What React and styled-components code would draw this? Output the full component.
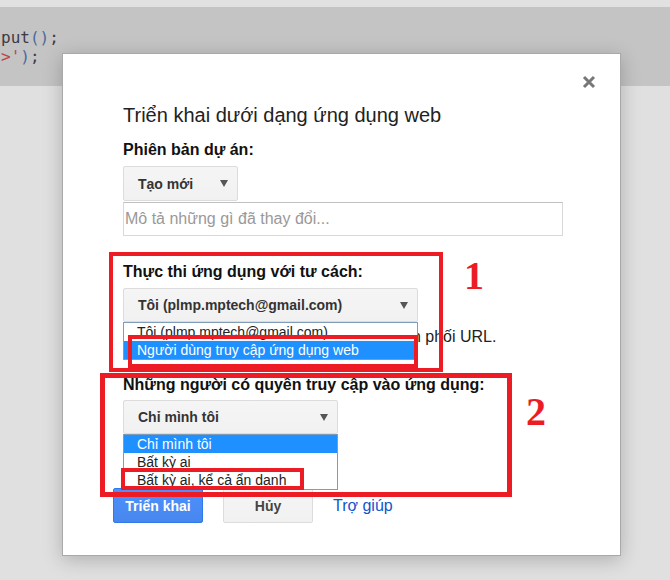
import React from "react";
import styled, { createGlobalStyle } from "styled-components";

const GlobalStyle = createGlobalStyle`
  html, body {
    margin: 0;
    padding: 0;
    background: #e0e0e0;
  }
  body {
    font-family: "Liberation Sans", Arial, sans-serif;
  }
`;

const Page = styled.div`
  position: relative;
  width: 670px;
  height: 580px;
  overflow: hidden;
  display: flex;
  flex-direction: column;
  background: #e0e0e0;
`;

const TopStrip = styled.div`
  height: 7px;
  background: #e1e1e1;
`;

const EditorBand = styled.div`
  height: 79px;
  box-sizing: border-box;
  padding: 21px 0 0 1px;
  background: #c4c4c4;
  font-family: "DejaVu Sans Mono", "Liberation Mono", monospace;
  font-size: 16px;
  line-height: 19px;
  color: #3d3a44;
  white-space: pre;
`;

const Token = styled.span`
  color: ${(p) => p.$color || "inherit"};
`;

const Dialog = styled.div`
  position: absolute;
  left: 62px;
  top: 53px;
  width: 559px;
  height: 503px;
  box-sizing: border-box;
  padding: 49px 57px 0 60px;
  display: flex;
  flex-direction: column;
  background: #fff;
  border: 1px solid #a9a9a9;
  box-shadow: 0 4px 18px rgba(0, 0, 0, 0.22);
  color: #222;
`;

const CloseButton = styled.button`
  position: absolute;
  top: 21px;
  right: 24px;
  width: 14px;
  height: 14px;
  padding: 0;
  border: none;
  background: none;
  cursor: pointer;
  display: flex;
`;

const Title = styled.h2`
  margin: 0;
  font-size: 20px;
  line-height: 24px;
  font-weight: normal;
  color: #222;
`;

const Label = styled.div`
  margin-top: ${(p) => p.$mt}px;
  font-size: 16px;
  line-height: 20px;
  font-weight: bold;
  color: #111;
`;

const Field = styled.div`
  position: relative;
  width: ${(p) => p.$w}px;
  margin-top: ${(p) => p.$mt}px;
`;

const SelectButton = styled.div`
  box-sizing: border-box;
  height: ${(p) => p.$h}px;
  display: flex;
  align-items: center;
  justify-content: space-between;
  padding: 0 9px 0 14px;
  background: linear-gradient(#f5f5f5, #f1f1f1);
  border: 1px solid #dcdcdc;
  border-radius: 2px;
  font-size: 14px;
  font-weight: bold;
  color: #333;
`;

const Caret = styled.span`
  width: 0;
  height: 0;
  border-left: 4px solid transparent;
  border-right: 4px solid transparent;
  border-top: 7px solid #555;
`;

const OptionList = styled.ul`
  position: absolute;
  left: 0;
  top: 100%;
  box-sizing: border-box;
  width: 100%;
  margin: 0;
  padding: 0;
  list-style: none;
  background: #fff;
  border: 1px solid #7f9db9;
  z-index: 2;
`;

const OptionItem = styled.li`
  height: 18px;
  line-height: 18px;
  padding-left: 13px;
  font-size: 14px;
  white-space: nowrap;
  color: ${(p) => (p.$active ? "#fff" : "#222")};
  background: ${(p) => (p.$active ? "#1e90ff" : "transparent")};
`;

const DescInput = styled.input`
  box-sizing: border-box;
  width: 100%;
  height: 34px;
  margin-top: 1px;
  padding: 0 0 0 1px;
  border: 1px solid #d9d9d9;
  border-top-color: #c0c0c0;
  font-family: "Liberation Sans", Arial, sans-serif;
  font-size: 16px;
  color: #222;
  outline: none;

  &::placeholder {
    color: #999;
  }
`;

const Hint = styled.p`
  margin: 5px 0 0;
  font-size: 16px;
  line-height: 20px;
  color: #222;
  white-space: nowrap;
`;

const ButtonRow = styled.div`
  display: flex;
  align-items: center;
  gap: 20px;
  margin: 54px 0 0 -10px;
`;

const Button = styled.button`
  box-sizing: border-box;
  width: 90px;
  height: 35px;
  padding: 0;
  border-radius: 2px;
  font-family: "Liberation Sans", Arial, sans-serif;
  font-size: 14px;
  font-weight: bold;
  cursor: pointer;
  color: ${(p) => (p.$primary ? "#fff" : "#444")};
  background: ${(p) =>
    p.$primary ? "linear-gradient(#4d90fe, #4787ed)" : "linear-gradient(#f5f5f5, #f1f1f1)"};
  border: 1px solid ${(p) => (p.$primary ? "#3079ed" : "#dcdcdc")};
`;

const HelpLink = styled.a`
  font-size: 16px;
  color: #15c;
  text-decoration: none;
  cursor: pointer;
`;

const Highlight = styled.div`
  position: absolute;
  left: ${(p) => p.$x}px;
  top: ${(p) => p.$y}px;
  width: ${(p) => p.$w}px;
  height: ${(p) => p.$h}px;
  box-sizing: border-box;
  border: ${(p) => p.$b}px solid #ed1c24;
  pointer-events: none;
  z-index: 5;
`;

const StepNumber = styled.div`
  position: absolute;
  left: ${(p) => p.$x}px;
  top: ${(p) => p.$y}px;
  font-family: "Liberation Serif", "Times New Roman", serif;
  font-weight: bold;
  font-size: 40px;
  line-height: 40px;
  color: #ed1c24;
  z-index: 5;
`;

const Select = ({ width, mt, h = 34, value, options, active }) => (
  <Field $w={width} $mt={mt}>
    <SelectButton $h={h}>
      <span>{value}</span>
      <Caret />
    </SelectButton>
    {options && (
      <OptionList>
        {options.map((o, i) => (
          <OptionItem key={o} $active={i === active}>
            {o}
          </OptionItem>
        ))}
      </OptionList>
    )}
  </Field>
);

const App = () => {
  return (
    <>
      <GlobalStyle />
      <Page>
        <TopStrip />
        <EditorBand>
          <Token>put</Token>
          <Token $color="#4d6a9c">()</Token>
          <Token>;</Token>
          {"\n"}
          <Token $color="#b8484a">&gt;'</Token>
          <Token $color="#4d6a9c">)</Token>
          <Token>;</Token>
        </EditorBand>

        <Dialog>
          <CloseButton aria-label="Đóng">
            <svg width="14" height="14" viewBox="0 0 14 14">
              <path d="M2 2 L12 12 M12 2 L2 12" stroke="#777" strokeWidth="3" />
            </svg>
          </CloseButton>

          <Title>Triển khai dưới dạng ứng dụng web</Title>

          <Label $mt={13}>Phiên bản dự án:</Label>
          <Select width={115} mt={6} h={35} value="Tạo mới" />
          <DescInput placeholder="Mô tả những gì đã thay đổi..." />

          <Label $mt={26}>Thực thi ứng dụng với tư cách:</Label>
          <Select
            width={295}
            mt={6}
            value="Tôi (plmp.mptech@gmail.com)"
            options={["Tôi (plmp.mptech@gmail.com)", "Người dùng truy cập ứng dụng web"]}
            active={1}
          />
          <Hint>Bạn cần ủy quyền tập lệnh trước khi phân phối URL.</Hint>

          <Label $mt={28}>Những người có quyền truy cập vào ứng dụng:</Label>
          <Select
            width={215}
            mt={5}
            value="Chỉ mình tôi"
            options={["Chỉ mình tôi", "Bất kỳ ai", "Bất kỳ ai, kể cả ẩn danh"]}
            active={0}
          />

          <ButtonRow>
            <Button $primary>Triển khai</Button>
            <Button>Hủy</Button>
            <HelpLink>Trợ giúp</HelpLink>
          </ButtonRow>
        </Dialog>

        <Highlight $x={109} $y={252} $w={334} $h={120} $b={4} />
        <Highlight $x={128} $y={335} $w={290} $h={33} $b={4} />
        <Highlight $x={100} $y={373} $w={412} $h={124} $b={5} />
        <Highlight $x={121} $y={468} $w={183} $h={22} $b={4} />
        <StepNumber $x={464} $y={256}>1</StepNumber>
        <StepNumber $x={526} $y={392}>2</StepNumber>
      </Page>
    </>
  );
};

export default App;
